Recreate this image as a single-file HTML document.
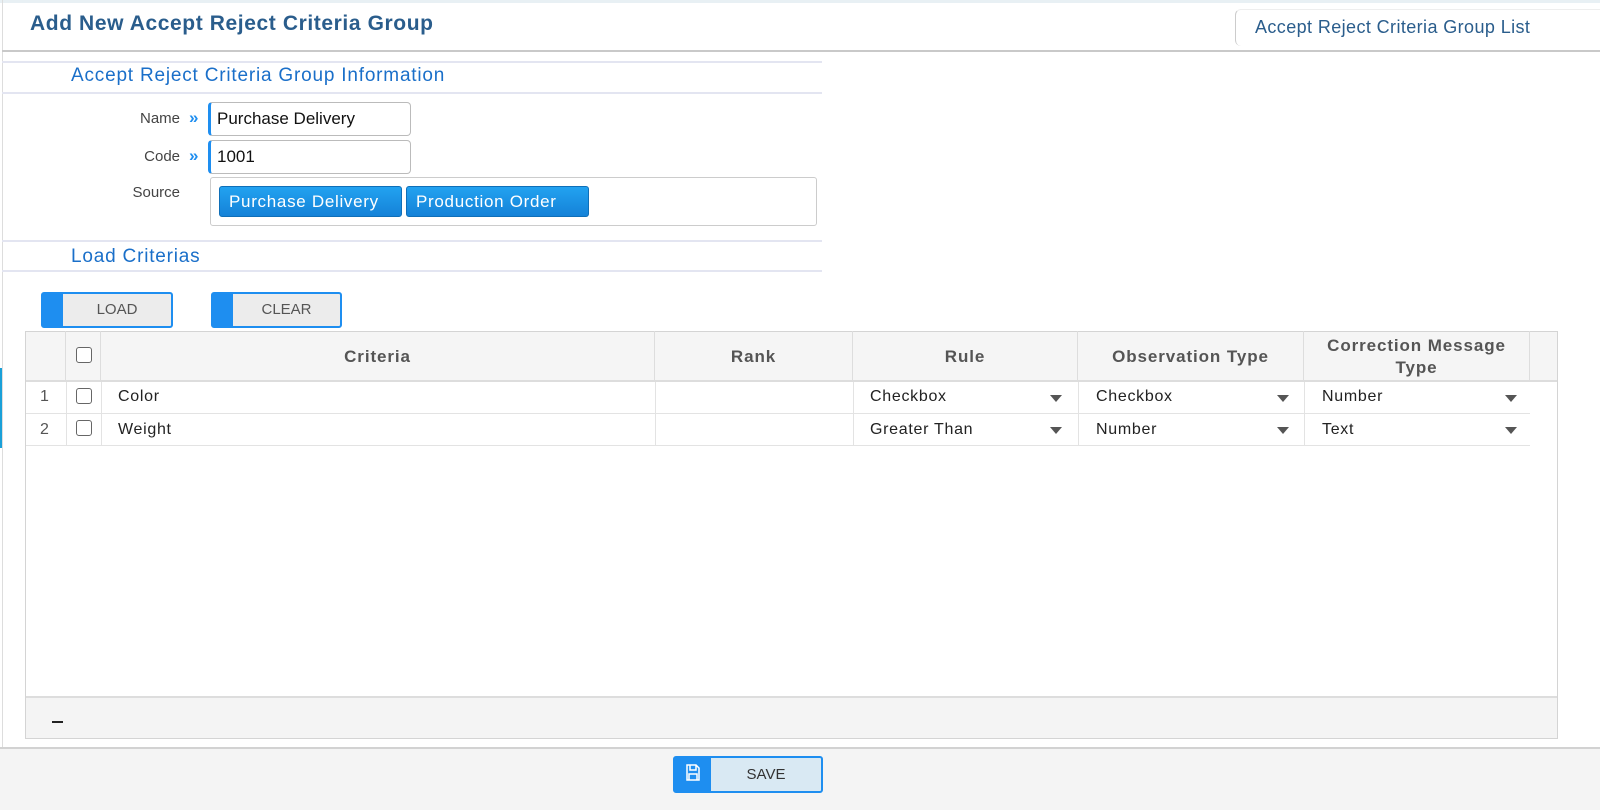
<!DOCTYPE html>
<html><head><style>
*{box-sizing:border-box;margin:0;padding:0}
body{width:1600px;height:810px;background:#fff;font-family:"Liberation Sans",sans-serif;position:relative;overflow:hidden;color:#222}
.a{position:absolute}
.hl{position:absolute;height:2px;background:#e3e5f1;left:2px;width:820px}
.lbl{position:absolute;font-size:15px;color:#444;text-align:right;width:100px;left:80px}
.arr{position:absolute;left:189px;color:#1e8ef0;font-size:17px;font-weight:bold}
.inp{position:absolute;left:208px;width:203px;height:34px;border:1px solid #bbb;border-left:3px solid #1e8ef0;border-radius:4px;font-size:17px;padding:6px 6px;color:#111}
.bb{position:absolute;top:186px;height:31px;background:linear-gradient(#22a2f0,#1582d8);color:#fff;font-size:17px;letter-spacing:0.7px;border-radius:3px;border:1px solid #0f6fb8;padding:5px 9px;white-space:nowrap}
.btn{position:absolute;top:292px;height:36px;border:2px solid #1e8ef0;border-left:22px solid #1e8ef0;background:#ececec;color:#555;font-size:15px;text-align:center;line-height:32px;border-radius:3px}
.th{position:absolute;top:331px;height:51px;border-right:1px solid #ddd;font-weight:bold;color:#555;font-size:17px;letter-spacing:0.9px;text-align:center;display:flex;align-items:center;justify-content:center;line-height:22px}
.cb{position:absolute;width:16px;height:16px;border:1.5px solid #666;border-radius:3px;background:#fff;left:76px}
.td{position:absolute;font-size:16px;color:#222;letter-spacing:0.7px}
.dd{position:absolute;width:0;height:0;border-left:6px solid transparent;border-right:6px solid transparent;border-top:7px solid #555}
.vl{position:absolute;width:1px;background:#e3e3e3}
</style></head><body>
<div class="a" style="left:0;top:0;width:1600px;height:3px;background:#e8f0f4"></div>
<div class="a" style="left:2px;top:0;width:1px;height:750px;background:#ddd"></div>
<div class="a" style="left:2px;top:50px;width:1598px;height:2px;background:#c9c9c9"></div>
<div class="a" style="left:30px;top:12px;font-size:21px;letter-spacing:0.6px;font-weight:bold;color:#2a5d8c">Add New Accept Reject Criteria Group</div>
<div class="a" style="left:1235px;top:9px;width:370px;height:37px;border-left:1px solid #ccc;border-top:1px solid #eee;border-radius:6px 0 0 6px"></div>
<div class="a" style="left:1255px;top:17px;font-size:18px;letter-spacing:0.4px;color:#2a5d8c">Accept Reject Criteria Group List</div>

<div class="hl" style="top:61px"></div>
<div class="a" style="left:71px;top:65px;font-size:19px;letter-spacing:0.8px;color:#1a6fc9">Accept Reject Criteria Group Information</div>
<div class="hl" style="top:92px"></div>
<div class="lbl" style="top:110px">Name</div><div class="arr" style="top:108px">»</div>
<div class="inp" style="top:102px">Purchase Delivery</div>
<div class="lbl" style="top:148px">Code</div><div class="arr" style="top:146px">»</div>
<div class="inp" style="top:140px">1001</div>
<div class="lbl" style="top:184px">Source</div>
<div class="a" style="left:210px;top:177px;width:607px;height:49px;border:1px solid #ccc;border-radius:3px"></div>
<div class="bb" style="left:219px;width:183px">Purchase Delivery</div>
<div class="bb" style="left:406px;width:183px">Production Order</div>
<div class="hl" style="top:240px"></div>
<div class="a" style="left:71px;top:246px;font-size:19px;letter-spacing:0.8px;color:#1a6fc9">Load Criterias</div>
<div class="hl" style="top:270px"></div>
<div class="btn" style="left:41px;width:132px">LOAD</div>
<div class="btn" style="left:211px;width:131px">CLEAR</div>
<div class="a" style="left:0;top:368px;width:2px;height:80px;background:#1aa0d8"></div>

<div class="a" style="left:25px;top:331px;width:1533px;height:408px;border:1px solid #d4d4d4;background:#fff"></div>
<div class="a" style="left:26px;top:332px;width:1531px;height:50px;background:#f5f5f5;border-bottom:2px solid #ddd"></div>
<div class="th" style="left:25px;width:41px"></div>
<div class="th" style="left:66px;width:35px"></div>
<div class="cb" style="top:347px"></div>
<div class="th" style="left:101px;width:554px">Criteria</div>
<div class="th" style="left:655px;width:198px">Rank</div>
<div class="th" style="left:853px;width:225px">Rule</div>
<div class="th" style="left:1078px;width:226px">Observation Type</div>
<div class="th" style="left:1304px;width:226px">Correction Message<br>Type</div>
<div class="vl" style="left:66px;top:382px;height:63px"></div>
<div class="vl" style="left:101px;top:382px;height:63px"></div>
<div class="vl" style="left:655px;top:382px;height:63px"></div>
<div class="vl" style="left:853px;top:382px;height:63px"></div>
<div class="vl" style="left:1078px;top:382px;height:63px"></div>
<div class="vl" style="left:1304px;top:382px;height:63px"></div>
<div class="a" style="left:26px;top:413px;width:1504px;height:1px;background:#e3e3e3"></div>
<div class="a" style="left:26px;top:445px;width:1504px;height:1px;background:#e3e3e3"></div>
<div class="td" style="left:40px;top:388px;color:#555">1</div>
<div class="cb" style="top:388px"></div>
<div class="td" style="left:118px;top:388px">Color</div>
<div class="td" style="left:870px;top:388px">Checkbox</div><div class="dd" style="left:1050px;top:395px"></div>
<div class="td" style="left:1096px;top:388px">Checkbox</div><div class="dd" style="left:1277px;top:395px"></div>
<div class="td" style="left:1322px;top:388px">Number</div><div class="dd" style="left:1505px;top:395px"></div>
<div class="td" style="left:40px;top:421px;color:#555">2</div>
<div class="cb" style="top:420px"></div>
<div class="td" style="left:118px;top:421px">Weight</div>
<div class="td" style="left:870px;top:421px">Greater Than</div><div class="dd" style="left:1050px;top:427px"></div>
<div class="td" style="left:1096px;top:421px">Number</div><div class="dd" style="left:1277px;top:427px"></div>
<div class="td" style="left:1322px;top:421px">Text</div><div class="dd" style="left:1505px;top:427px"></div>
<div class="a" style="left:26px;top:696px;width:1531px;height:42px;background:#f4f4f4;border-top:2px solid #ddd"></div>
<div class="a" style="left:52px;top:721px;width:11px;height:2px;background:#222"></div>

<div class="a" style="left:0;top:747px;width:1600px;height:63px;background:#f4f4f4;border-top:2px solid #d2d2d2"></div>
<div class="a" style="left:673px;top:756px;width:150px;height:37px;border:2px solid #1e8ef0;border-left:38px solid #1e8ef0;background:#d9e9f3;border-radius:3px;text-align:center;line-height:33px;font-size:15px;color:#333">SAVE</div>
<svg class="a" style="left:686px;top:764px" width="14" height="17" viewBox="0 0 14 17"><path d="M1 1h9l3 3v12H1z M4 1v5h6V1 M3 10h8v6H3z" fill="none" stroke="#fff" stroke-width="1.5"/></svg>
</body></html>
